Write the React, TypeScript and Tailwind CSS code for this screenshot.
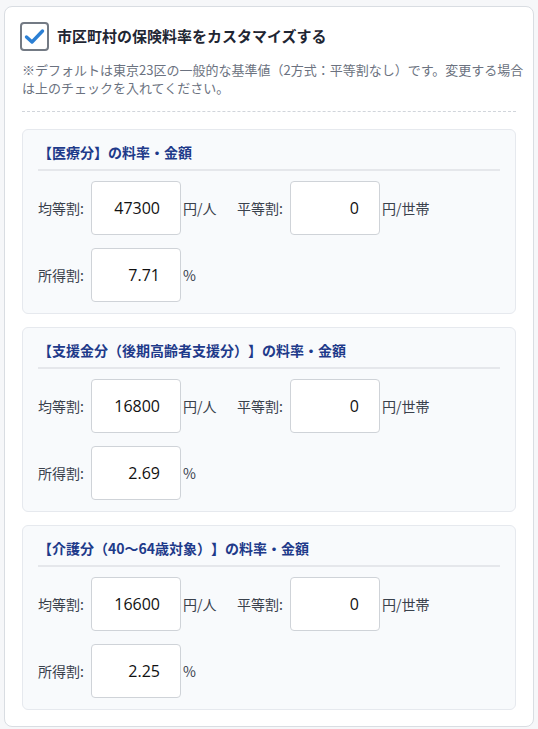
const font = { fontFamily: '"Noto Sans CJK JP", "Noto Sans", sans-serif' };

interface RateRowProps {
  label: string;
  value: string;
  unit: string;
}

const RateField: React.FC<RateRowProps> = ({ label, value, unit }) => {
  return (
    <div className="flex items-center">
      <span className="w-[53px] text-[14px] text-[#3a414c]">{label}</span>
      <input
        type="text"
        defaultValue={value}
        className="w-[90px] h-[54px] border border-[#cfd3d8] rounded-[4px] bg-white text-right pr-[20px] text-[16px] text-[#111] outline-none font-['Open_Sans',sans-serif]"
      />
      <span className="w-[56px] pl-[2px] text-[14px] text-[#3a414c]">{unit}</span>
    </div>
  );
};

interface SectionProps {
  title: string;
  perPerson: string;
  perHousehold: string;
  incomeRate: string;
}

const RateSection: React.FC<SectionProps> = ({ title, perPerson, perHousehold, incomeRate }) => {
  return (
    <div className="bg-[#f8fafc] border border-[#e6e9ee] rounded-[6px] px-[15px] pt-[12px] pb-[11px]">
      <h3 className="text-[14px] leading-[20px] font-bold text-[#1e3a8a] pb-[7px] border-b-2 border-[#e5e7eb] [text-spacing-trim:space-all]">
        {title}
      </h3>
      <div className="mt-[10px] flex flex-col gap-[13px]">
        <div className="flex items-center">
          <RateField label="均等割:" value={perPerson} unit="円/人" />
          <RateField label="平等割:" value={perHousehold} unit="円/世帯" />
        </div>
        <RateField label="所得割:" value={incomeRate} unit="%" />
      </div>
    </div>
  );
};

export default function App() {
  return (
    <div className="min-h-screen bg-[#f6f7f9] pt-[6px] px-[4px] pb-[3px] [text-spacing-trim:space-all]" style={font}>
      <div className="bg-white border border-[#d9dde2] rounded-[8px] pt-[15px] px-[17px] pb-[16px]">
        <div className="flex items-center gap-[8px] -ml-[2px]">
          <div className="w-[29px] h-[29px] border-2 border-[#737a84] rounded-[4px] bg-white flex items-center justify-center">
            <svg width="21" height="17" viewBox="0 0 21 17" fill="none">
              <path d="M2.5 9 L8 14 L18.5 3" stroke="#2b7fd4" strokeWidth="3.4" strokeLinecap="round" strokeLinejoin="round" />
            </svg>
          </div>
          <h2 className="text-[15px] font-bold text-[#1f2633]">市区町村の保険料率をカスタマイズする</h2>
        </div>
        <p className="mt-[10px] text-[13px] leading-[18px] text-[#6b7280] mr-[-12px]">
          ※デフォルトは東京23区の一般的な基準値（2方式：平等割なし）です。変更する場合
          <br />
          は上のチェックを入れてください。
        </p>
        <div className="mt-[14px] border-t border-dashed border-[#d1d5db]" />
        <div className="mt-[17px] flex flex-col gap-[13px]">
          <RateSection title="【医療分】の料率・金額" perPerson="47300" perHousehold="0" incomeRate="7.71" />
          <RateSection title="【支援金分（後期高齢者支援分）】の料率・金額" perPerson="16800" perHousehold="0" incomeRate="2.69" />
          <RateSection title="【介護分（40〜64歳対象）】の料率・金額" perPerson="16600" perHousehold="0" incomeRate="2.25" />
        </div>
      </div>
    </div>
  );
}
